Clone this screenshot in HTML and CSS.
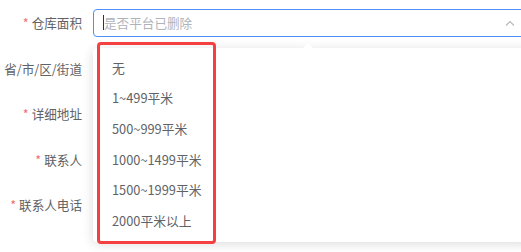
FILE: index.html
```html
<!DOCTYPE html>
<html lang="zh-CN">
<head>
    <meta charset="UTF-8">
    <meta name="viewport" content="width=device-width, initial-scale=1.0">
    <title>仓库信息</title>
    <link rel="stylesheet" href="styles.css">
</head>
<body>

    <form class="form">
        <div class="form-item">
            <label class="label required">仓库面积</label>
            <div class="select">
                <span class="caret"></span>
                <span class="placeholder">是否平台已删除</span>
                <svg class="arrow" width="10" height="6" viewBox="0 0 10 6">
                    <path d="M1 5.5 L5 1.5 L9 5.5" fill="none" stroke="#b4b7bd" stroke-width="1.1"/>
                </svg>
            </div>
        </div>
        <div class="form-item">
            <label class="label">省/市/区/街道</label>
        </div>
        <div class="form-item">
            <label class="label required">详细地址</label>
        </div>
        <div class="form-item">
            <label class="label required">联系人</label>
        </div>
        <div class="form-item">
            <label class="label required">联系人电话</label>
        </div>
    </form>

    <!-- dropdown of the area select -->
    <div class="dropdown">
        <span class="popper-arrow"></span>
        <ul class="options">
            <li>无</li>
            <li>1~499平米</li>
            <li>500~999平米</li>
            <li>1000~1499平米</li>
            <li>1500~1999平米</li>
            <li>2000平米以上</li>
        </ul>
    </div>

    <div class="highlight"></div>

</body>
</html>
```

FILE: styles.css
```css
body {
    font-family: "Noto Sans CJK SC", "Noto Sans", sans-serif;
    margin: 0;
    padding: 0;
    background-color: #fff;
    overflow: hidden;
    width: 521px;
    height: 252px;
    position: relative;
}
.form {
    padding-top: 9px;
}
.form-item {
    display: flex;
    align-items: center;
    height: 27.5px;
    margin-bottom: 18px;
}
.label {
    flex: none;
    width: 82px;
    padding-right: 11px;
    text-align: right;
    font-size: 12.6px;
    color: #606266;
    white-space: nowrap;
}
.label.required::before {
    content: "*";
    color: #f56c6c;
    margin-right: 3px;
}
.select {
    flex: none;
    position: relative;
    box-sizing: border-box;
    width: 440px;
    height: 27.5px;
    border: 1px solid #4d8ef8;
    border-radius: 4px;
    display: flex;
    align-items: center;
    padding-left: 9px;
}
.caret {
    width: 1px;
    height: 15px;
    background-color: #333;
}
.placeholder {
    font-size: 12.6px;
    color: #b0b3b9;
}
.arrow {
    position: absolute;
    left: 411px;
    top: 10px;
}
.dropdown {
    position: absolute;
    left: 93px;
    top: 48px;
    width: 440px;
    height: 194px;
    background-color: #fff;
    border-radius: 4px;
    box-shadow: 0 2px 12px rgba(0, 0, 0, 0.14);
}
.popper-arrow {
    position: absolute;
    left: 210px;
    top: -5px;
    width: 0;
    height: 0;
    border-left: 5px solid transparent;
    border-right: 5px solid transparent;
    border-bottom: 5px solid #fff;
}
.options {
    list-style: none;
    margin: 0;
    padding: 4.6px 0;
}
.options li {
    height: 30.7px;
    line-height: 30.7px;
    padding-left: 19px;
    font-size: 12.8px;
    color: #606266;
}
.highlight {
    position: absolute;
    left: 97px;
    top: 42px;
    width: 113px;
    height: 196px;
    border: 3px solid #f44040;
    border-radius: 4px;
}
```
